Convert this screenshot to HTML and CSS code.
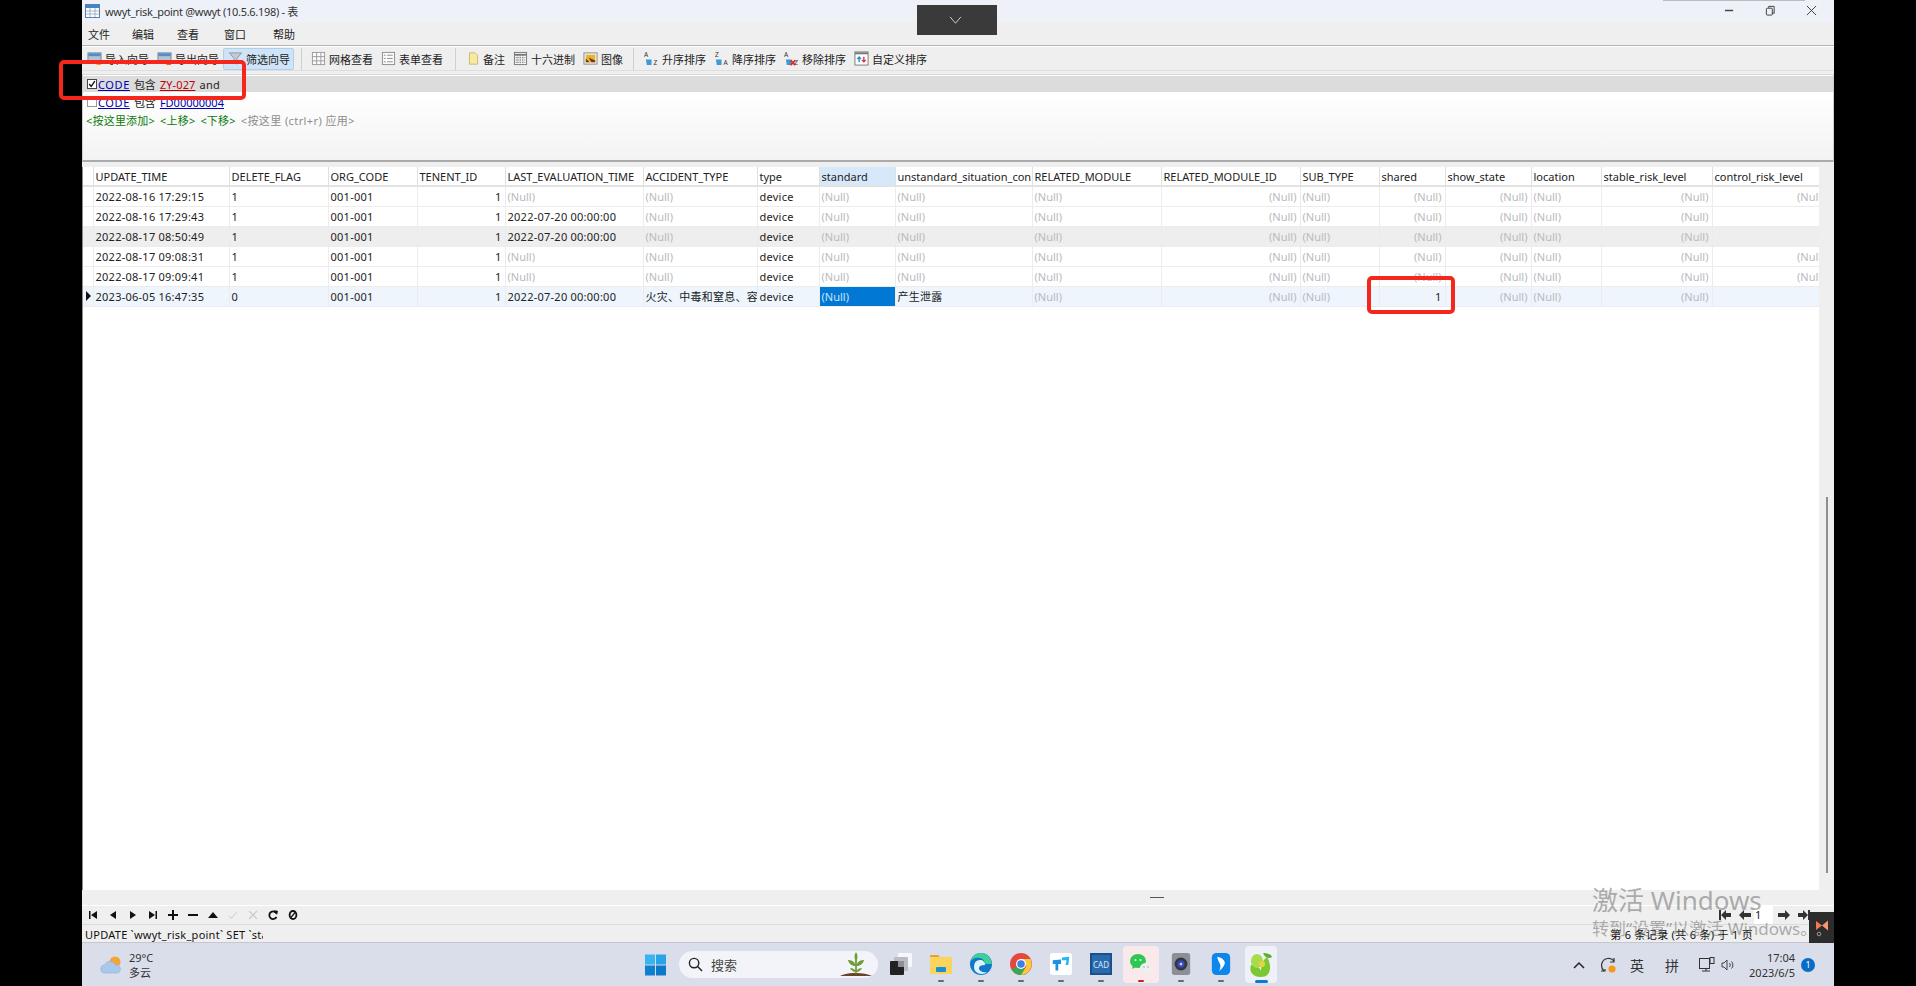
FILE: index.html
```html
<!DOCTYPE html>
<html lang="zh-CN">

<head>
    <meta charset="UTF-8">
    <title>wwyt_risk_point @wwyt (10.5.6.198) - 表</title>
    <link rel="stylesheet" href="styles.css">
</head>

<body>
    <div class="window">
        <!-- 标题栏 -->
        <div class="titlebar">
            <svg class="title-icon" viewBox="0 0 15 14"><rect x=".5" y=".5" width="14" height="13" fill="#fff" stroke="#5b7fa6"/><rect x="1" y="1" width="13" height="3" fill="#3f86c9"/><path d="M1 7h13M1 10h13M5 4v9M10 4v9" stroke="#9fb4c8"/></svg>
            <span class="title-text">wwyt_risk_point @wwyt (10.5.6.198) - 表</span>
            <div class="win-controls">
                <svg viewBox="0 0 12 12"><path d="M1 6h9" stroke="#444" stroke-width="1.6"/></svg>
                <svg viewBox="0 0 12 12" fill="none" stroke="#333"><rect x="1.5" y="3.5" width="6.5" height="7.5" rx="1"/><path d="M4 3V1.500h6V9H8"/></svg>
                <svg viewBox="0 0 12 12"><path d="M1 1l10 10M11 1L1 11" stroke="#333"/></svg>
            </div>
        </div>

        <div class="menubar">
            <span>文件</span><span>编辑</span><span>查看</span><span>窗口</span><span>帮助</span>
        </div>

        <!-- 工具栏 -->
        <div class="toolbar">
            <div class="tool">
                <svg viewBox="0 0 16 16"><rect x="1" y="2" width="14" height="11" fill="#b9c2cc" stroke="#7d8791"/><rect x="1.500" y="2.500" width="13" height="3" fill="#4a8fd0"/><path d="M10 12h5v3h-5z" fill="#e8a33c"/></svg>
                <span>导入向导</span>
            </div>
            <div class="tool">
                <svg viewBox="0 0 16 16"><rect x="1" y="2" width="14" height="11" fill="#b9c2cc" stroke="#7d8791"/><rect x="1.500" y="2.500" width="13" height="3" fill="#4a8fd0"/><path d="M10 12h5v3h-5z" fill="#d9702c"/></svg>
                <span>导出向导</span>
            </div>
            <div class="tool tool-active">
                <svg viewBox="0 0 16 16"><path d="M1.500 2h13L9.500 8v6l-3-1.500V8z" fill="#c3cbd2" stroke="#8d969e"/></svg>
                <span>筛选向导</span>
            </div>
            <i class="tool-sep"></i>
            <div class="tool">
                <svg viewBox="0 0 16 16" fill="#fafafa" stroke="#9a9a9a"><rect x="1.500" y="1.500" width="13" height="13"/><path d="M1.500 6h13M1.500 10.500h13M6 1.500v13M10.500 1.500v13"/></svg>
                <span>网格查看</span>
            </div>
            <div class="tool">
                <svg viewBox="0 0 16 16" fill="#fafafa" stroke="#8c8c8c"><rect x="1.500" y="1.500" width="13" height="13"/><path d="M3 4.500h2M3 8h2M3 11.500h2M6.500 4.500h6M6.500 8h6M6.500 11.500h6"/></svg>
                <span>表单查看</span>
            </div>
            <i class="tool-sep sep-b"></i>
            <div class="tool tool-note">
                <svg viewBox="0 0 16 16"><path d="M3 1h7l3 3v11H3z" fill="#f8e9a0" stroke="#c7b25a"/></svg>
                <span>备注</span>
            </div>
            <div class="tool">
                <svg viewBox="0 0 16 16" fill="#fafafa" stroke="#777"><rect x="1.500" y="1.500" width="13" height="13"/><path d="M1.500 4h13" stroke-width="2"/><path d="M1.500 7h13M1.500 9.500h13M1.500 12h13M4.500 4v10M7.500 4v10M10.500 4v10" stroke-dasharray="1 1"/></svg>
                <span>十六进制</span>
            </div>
            <div class="tool">
                <svg viewBox="0 0 16 16"><rect x="1" y="2" width="14" height="12" fill="#eee" stroke="#8a8a8a"/><rect x="3" y="4" width="10" height="8" fill="#e8b428"/><path d="M3 8l4 4H3zM6 7l7 3v2H9z" fill="#7a3510"/></svg>
                <span>图像</span>
            </div>
            <i class="tool-sep sep-c"></i>
            <div class="tool">
                <svg viewBox="0 0 16 16"><text x="0" y="6" class="sort-letter">A</text><text x="10" y="15" class="sort-letter">Z</text><path d="M2 9h6v6H3z" fill="#3d9ad6"/></svg>
                <span>升序排序</span>
            </div>
            <div class="tool">
                <svg viewBox="0 0 16 16"><text x="1" y="6" class="sort-letter">Z</text><text x="10" y="15" class="sort-letter">A</text><path d="M2 9h6v6H3z" fill="#3d9ad6"/></svg>
                <span>降序排序</span>
            </div>
            <div class="tool">
                <svg viewBox="0 0 16 16"><text x="0" y="6" class="sort-letter">A</text><text x="11" y="15" class="sort-letter">Z</text><path d="M2 9h6v6H3z" fill="#3d9ad6"/><path d="M7 10l5 5M12 10l-5 5" stroke="#d92c2c" stroke-width="2"/></svg>
                <span>移除排序</span>
            </div>
            <div class="tool">
                <svg viewBox="0 0 16 16"><rect x="1" y="1" width="14" height="14" fill="#fff" stroke="#777"/><path d="M1 2.500h14" stroke="#777" stroke-width="2"/><path d="M5.500 12V7M3.500 8.500l2-2 2 2" stroke="#2b8fd0" fill="none" stroke-width="1.500"/><path d="M10.500 6v5M8.500 9.500l2 2 2-2" stroke="#d33a4a" fill="none" stroke-width="1.500"/></svg>
                <span>自定义排序</span>
            </div>
        </div>

        <!-- 筛选 -->
        <div class="filter">
            <div class="filter-row filter-active">
                <span class="check checked"><svg viewBox="0 0 10 10"><path d="M1.500 5l2.500 3 4.500-6.500" fill="none" stroke="#111" stroke-width="1.700"/></svg></span>
                <a class="field code">CODE</a><span>包含</span><a class="value-red">ZY-027</a><span class="kw">and</span>
            </div>
            <div class="filter-row">
                <span class="check"></span>
                <a class="field code">CODE</a><span>包含</span><a class="field">FD00000004</a>
            </div>
            <div class="filter-actions">
                <span>&lt;按这里添加&gt;</span><span>&lt;上移&gt;</span><span>&lt;下移&gt;</span><span class="apply">&lt;按这里 (ctrl+r) 应用&gt;</span>
            </div>
        </div>

        <!-- 数据表 -->
        <div class="grid-area">
            <div class="grid">
                <table class="data">
                    <colgroup>
                        <col class="c0"><col class="c1"><col class="c2"><col class="c3"><col class="c4"><col class="c5"><col class="c6"><col class="c7"><col class="c8"><col class="c9"><col class="c10"><col class="c11"><col class="c12"><col class="c13"><col class="c14"><col class="c15"><col class="c16"><col class="c17">
                    </colgroup>
                    <thead>
                        <tr>
                            <th></th>
                            <th>UPDATE_TIME</th><th>DELETE_FLAG</th><th>ORG_CODE</th><th>TENENT_ID</th><th>LAST_EVALUATION_TIME</th><th>ACCIDENT_TYPE</th><th>type</th><th class="col-current">standard</th><th>unstandard_situation_con</th><th>RELATED_MODULE</th><th>RELATED_MODULE_ID</th><th>SUB_TYPE</th><th>shared</th><th>show_state</th><th>location</th><th>stable_risk_level</th><th>control_risk_level</th>
                        </tr>
                    </thead>
                    <tbody>
                        <tr>
                            <td class="rh"></td>
                            <td>2022-08-16 17:29:15</td><td>1</td><td>001-001</td><td class="r">1</td><td class="nul">(Null)</td><td class="nul">(Null)</td><td>device</td><td class="nul">(Null)</td><td class="nul">(Null)</td><td class="nul">(Null)</td><td class="r nul">(Null)</td><td class="nul">(Null)</td><td class="r nul">(Null)</td><td class="r nul">(Null)</td><td class="nul">(Null)</td><td class="r nul">(Null)</td><td class="r nul">(Null)</td>
                        </tr>
                        <tr>
                            <td class="rh"></td>
                            <td>2022-08-16 17:29:43</td><td>1</td><td>001-001</td><td class="r">1</td><td>2022-07-20 00:00:00</td><td class="nul">(Null)</td><td>device</td><td class="nul">(Null)</td><td class="nul">(Null)</td><td class="nul">(Null)</td><td class="r nul">(Null)</td><td class="nul">(Null)</td><td class="r nul">(Null)</td><td class="r nul">(Null)</td><td class="nul">(Null)</td><td class="r nul">(Null)</td><td></td>
                        </tr>
                        <tr class="alt">
                            <td class="rh"></td>
                            <td>2022-08-17 08:50:49</td><td>1</td><td>001-001</td><td class="r">1</td><td>2022-07-20 00:00:00</td><td class="nul">(Null)</td><td>device</td><td class="nul">(Null)</td><td class="nul">(Null)</td><td class="nul">(Null)</td><td class="r nul">(Null)</td><td class="nul">(Null)</td><td class="r nul">(Null)</td><td class="r nul">(Null)</td><td class="nul">(Null)</td><td class="r nul">(Null)</td><td></td>
                        </tr>
                        <tr>
                            <td class="rh"></td>
                            <td>2022-08-17 09:08:31</td><td>1</td><td>001-001</td><td class="r">1</td><td class="nul">(Null)</td><td class="nul">(Null)</td><td>device</td><td class="nul">(Null)</td><td class="nul">(Null)</td><td class="nul">(Null)</td><td class="r nul">(Null)</td><td class="nul">(Null)</td><td class="r nul">(Null)</td><td class="r nul">(Null)</td><td class="nul">(Null)</td><td class="r nul">(Null)</td><td class="r nul">(Null)</td>
                        </tr>
                        <tr>
                            <td class="rh"></td>
                            <td>2022-08-17 09:09:41</td><td>1</td><td>001-001</td><td class="r">1</td><td class="nul">(Null)</td><td class="nul">(Null)</td><td>device</td><td class="nul">(Null)</td><td class="nul">(Null)</td><td class="nul">(Null)</td><td class="r nul">(Null)</td><td class="nul">(Null)</td><td class="r nul">(Null)</td><td class="r nul">(Null)</td><td class="nul">(Null)</td><td class="r nul">(Null)</td><td class="r nul">(Null)</td>
                        </tr>
                        <tr class="current">
                            <td class="rh"><i class="row-mark"></i></td>
                            <td>2023-06-05 16:47:35</td><td>0</td><td>001-001</td><td class="r">1</td><td>2022-07-20 00:00:00</td><td>火灾、中毒和窒息、容器爆炸</td><td>device</td><td class="nul selected">(Null)</td><td>产生泄露</td><td class="nul">(Null)</td><td class="r nul">(Null)</td><td class="nul">(Null)</td><td class="r">1</td><td class="r nul">(Null)</td><td class="nul">(Null)</td><td class="r nul">(Null)</td><td></td>
                        </tr>
                    </tbody>
                </table>
            </div>
            <div class="vscroll"><i></i></div>
        </div>

        <div class="splitter"><i></i></div>

        <!-- 记录导航 -->
        <div class="navbar">
            <div class="nav-btn"><svg viewBox="0 0 10 10"><path d="M1 1h1.500v8H1zM9 1v8L3 5z"/></svg></div>
            <div class="nav-btn"><svg viewBox="0 0 10 10"><path d="M8 1v8L2 5z"/></svg></div>
            <div class="nav-btn"><svg viewBox="0 0 10 10"><path d="M2 1v8l6-4z"/></svg></div>
            <div class="nav-btn"><svg viewBox="0 0 10 10"><path d="M1 1v8l6-4zM7.500 1H9v8H7.500z"/></svg></div>
            <div class="nav-btn"><svg viewBox="0 0 10 10"><path d="M4 0h2v4h4v2H6v4H4V6H0V4h4z"/></svg></div>
            <div class="nav-btn"><svg viewBox="0 0 10 10"><path d="M0 4h10v2H0z"/></svg></div>
            <div class="nav-btn"><svg viewBox="0 0 10 10"><path d="M5 2l5 6H0z"/></svg></div>
            <div class="nav-btn"><svg viewBox="0 0 12 10"><path d="M1 6l3 3 7-8" fill="none" stroke="#ccc" stroke-width="1.200"/></svg></div>
            <div class="nav-btn"><svg viewBox="0 0 10 10"><path d="M1 1l8 8M9 1L1 9" stroke="#ccc" stroke-width="1.200"/></svg></div>
            <div class="nav-btn"><svg viewBox="0 0 10 10"><path d="M8.500 3.500A3.800 3.800 0 1 0 8.500 7" fill="none" stroke="#111" stroke-width="1.800"/><path d="M6 0l4 1-1 4z"/></svg></div>
            <div class="nav-btn"><svg viewBox="0 0 10 10"><ellipse cx="5" cy="5" rx="3.400" ry="4" fill="none" stroke="#111" stroke-width="1.800"/><path d="M2.500 8l5-6" stroke="#111" stroke-width="1.200"/></svg></div>
            <div class="pager">
                <svg viewBox="0 0 12 10"><path d="M0 0h2v10H0zM2 5l5-5v3h5v4H7v3z" fill="#333"/></svg>
                <svg viewBox="0 0 12 10"><path d="M0 5l5-5v3h7v4H5v3z" fill="#333"/></svg>
                <span class="page-input">1</span>
                <svg viewBox="0 0 12 10"><path d="M12 5L7 0v3H0v4h7v3z" fill="#333"/></svg>
                <svg viewBox="0 0 12 10"><path d="M12 0h-2v10h2zM10 5L5 0v3H0v4h5v3z" fill="#333"/></svg>
            </div>
        </div>

        <div class="statusbar">
            <span class="sql">UPDATE `wwyt_risk_point` SET `standard`</span>
            <span class="rec">第 6 条记录 (共 6 条) 于 1 页</span>
        </div>

        <!-- 任务栏 -->
        <div class="taskbar">
            <div class="weather">
                <svg viewBox="0 0 22 20"><circle cx="15" cy="7" r="5.500" fill="#f4a534"/><path d="M5 18a4 4 0 0 1-.5-8A6 6 0 0 1 15.500 10 4 4 0 0 1 17 18z" fill="#a9c8ea" stroke="#8db1da" stroke-width=".6"/></svg>
                <div class="weather-text"><span>29°C</span><span>多云</span></div>
            </div>
            <svg class="start" viewBox="0 0 22 22"><path d="M0 0h10.500v10.500H0z" fill="#38b4f0"/><path d="M11.500 0H22v10.500H11.500z" fill="#2aa3e6"/><path d="M0 11.500h10.500V22H0z" fill="#0f7fd0"/><path d="M11.500 11.500H22V22H11.500z" fill="#0e78c8"/></svg>
            <div class="search">
                <svg viewBox="0 0 16 16" class="search-icon"><circle cx="6.500" cy="6.500" r="5" fill="none" stroke="#222" stroke-width="1.500"/><path d="M10.200 10.200L15 15" stroke="#222" stroke-width="1.500"/></svg>
                <span>搜索</span>
                <svg viewBox="0 0 32 26" class="plant"><path d="M0 24c8-4 24-4 32 0z" fill="#6b4326"/><path d="M16 22V8" stroke="#5c8a2c" stroke-width="1.500"/><path d="M16 10C14 6 14 3 16 0c2 3 2 6 0 10zM16 14c-4 0-7-2-8-6 4 0 7 2 8 6zM16 14c4 0 7-2 8-6-4 0-7 2-8 6zM16 20c-3 0-5-2-6-4 3 0 5 1 6 4zM16 20c3 0 5-2 6-4-3 0-5 1-6 4z" fill="#6f9e36"/></svg>
            </div>
            <div class="slot">
                <svg viewBox="0 0 22 22"><rect x="8" y="0" width="14" height="14" rx="1" fill="#f6f7fa"/><rect x="4" y="4" width="14" height="14" rx="1" fill="#b9bcc4"/><rect x="0" y="8" width="14" height="14" rx="1" fill="#222"/><rect x="8" y="8" width="6" height="6" fill="#8d9098"/></svg>
            </div>
            <div class="slot dot">
                <svg viewBox="0 0 22 22"><path d="M0 3a1 1 0 0 1 1-1h7l2 2H0z" fill="#e0a526"/><rect x="0" y="4" width="22" height="17" rx="1" fill="#fbd55b"/><rect x="6" y="14" width="10" height="5" rx="1" fill="#1a8fd8"/></svg>
            </div>
            <div class="slot dot">
                <svg viewBox="0 0 22 22"><circle cx="11" cy="11" r="11" fill="#1177c9"/><path d="M22 12c0-7-5-12-11-12C6 0 2 3 1 8c2-3 6-4 9-3 4 1 5 4 4 6h8z" fill="#3fcf9a"/><path d="M15 12c0-3-2-5-5-5-4 0-6 3-6 7s3 7 8 7c2 0 4-1 5-2-4 1-8-1-8-4 0-2 2-3 6-3z" fill="#dff1fb"/></svg>
            </div>
            <div class="slot dot">
                <svg viewBox="0 0 22 22"><circle cx="11" cy="11" r="11" fill="#e5483d"/><path d="M11 11L1.500 16.500A11 11 0 0 0 11 22c2 0 4-.5 5.500-1.500z" fill="#3aa655"/><path d="M11 6h9.500A11 11 0 0 1 11 22l5.500-9z" fill="#f8cb3f"/><circle cx="11" cy="11" r="5" fill="#fff"/><circle cx="11" cy="11" r="3.800" fill="#3f7fe8"/></svg>
            </div>
            <div class="slot dot">
                <svg viewBox="0 0 24 24"><rect width="24" height="24" rx="3" fill="#fff"/><path d="M3 8l9-1v5H9v7H6v-7H3z" fill="#1f8fe6"/><path d="M13 5l8-1-1 9h-3l1-5h-5z" fill="#26b6ee"/></svg>
            </div>
            <div class="slot dot">
                <svg viewBox="0 0 22 22"><rect x="0" y="0" width="22" height="22" fill="#1c4f8c"/><rect x="2" y="2" width="18" height="18" fill="#2a6bb0"/><text x="11" y="15" class="cad-text">CAD</text></svg>
            </div>
            <div class="slot dot dot-red slot-wechat">
                <svg viewBox="0 0 22 22"><ellipse cx="8" cy="8" rx="8" ry="7" fill="#2ec752"/><path d="M3 12l-1 4 4-2z" fill="#2ec752"/><circle cx="5.500" cy="7" r="1" fill="#fff"/><circle cx="10.500" cy="7" r="1" fill="#fff"/><ellipse cx="16" cy="15" rx="6" ry="5" fill="#eef0ee"/><circle cx="14" cy="14" r=".7" fill="#999"/><circle cx="18" cy="14" r=".7" fill="#999"/></svg>
            </div>
            <div class="slot dot">
                <svg viewBox="0 0 20 24"><rect width="20" height="24" rx="3" fill="#8c8f96"/><circle cx="10" cy="12" r="7" fill="#31363f"/><circle cx="10" cy="12" r="4" fill="#3a48b8"/><circle cx="10" cy="12" r="1.500" fill="#c7d2ff"/></svg>
            </div>
            <div class="slot dot">
                <svg viewBox="0 0 20 24"><rect width="20" height="24" rx="5" fill="#0f86ea"/><path d="M6 4c5 1 9 4 8 8-1 3-4 6-6 8 1-3 2-5 1-8-1-2-3-5-3-8z" fill="#fff"/></svg>
            </div>
            <div class="slot dot-wide slot-open">
                <svg viewBox="0 0 24 26"><path d="M12 26C3 26 0 20 2 14c4 0 9 2 10 6 0-7 2-11 6-14 4 6 6 20-6 20z" fill="#7cc734"/><ellipse cx="8" cy="10" rx="6" ry="7" fill="#a7dc4b"/><path d="M14 2c4 0 8 1 9 4-3 2-7 1-9-4z" fill="#5fae2c"/><circle cx="13" cy="13" r="3" fill="#e9d23f"/></svg>
            </div>
            <div class="tray">
                <svg class="tray-chev" viewBox="0 0 12 8"><path d="M1 7l5-5 5 5" fill="none" stroke="#222" stroke-width="1.500"/></svg>
                <svg class="tray-sync" viewBox="0 0 16 16"><path d="M14 4A7 7 0 0 0 2 6c-1 3 0 6 2 8M4 1" fill="none" stroke="#333" stroke-width="1.200"/><path d="M14 1v4h-4M1 14h4v-2" fill="none" stroke="#333" stroke-width="1.200"/><circle cx="12" cy="12" r="3.600" fill="#f59a1b"/></svg>
                <span class="tray-ime">英</span>
                <span class="tray-ime ime-b">拼</span>
                <svg class="tray-net" viewBox="0 0 16 16" fill="none" stroke="#333"><rect x=".5" y="1.500" width="10" height="10"/><path d="M3 14h8M7 11.500V14"/><rect x="11" y=".5" width="4" height="6" fill="#d9deea"/></svg>
                <svg class="tray-vol" viewBox="0 0 14 12" fill="none" stroke="#333" stroke-width=".9"><path d="M1 4h2l3-3v10L3 8H1z"/><path d="M8.500 4a3 3 0 0 1 0 4M10.500 2.500a5 5 0 0 1 0 7"/></svg>
                <div class="clock"><span>17:04</span><span>2023/6/5</span></div>
                <span class="notify">1</span>
            </div>
        </div>

        <!-- 盖在窗口上面的东西 -->
        <div class="top-tab"><svg viewBox="0 0 14 10"><path d="M1 1l6 7 6-7" fill="none" stroke="#ddd"/></svg></div>
        <div class="top-sliver"></div>
        <div class="mark mark-filter"></div>
        <div class="mark mark-cell"></div>
        <div class="corner-app"><svg viewBox="0 0 14 18"><path d="M1 2l6 4.500L1 11z" fill="#f0794f"/><path d="M13 1.500v10L7 6.500z" fill="#f6996f"/><circle cx="4" cy="15" r="1.800" fill="none" stroke="#999"/></svg></div>
        <div class="watermark">
            <div class="wm-big">激活 Windows</div>
            <div class="wm-small">转到“设置”以激活 Windows。</div>
        </div>
    </div>
</body>

</html>
```

FILE: styles.css
```css
* {
    box-sizing: border-box;
}

html,
body {
    margin: 0;
    height: 100%;
    overflow: hidden;
    background: #000;
}

body {
    font-family: "Noto Sans", "Noto Sans CJK SC", sans-serif;
    font-size: 11px;
    color: #222;
}

svg {
    display: block;
    flex: none;
}

.window {
    position: relative;
    width: 1752px;
    height: 986px;
    margin-left: 82px;
    display: flex;
    flex-direction: column;
    background: #efefef;
    filter: blur(0.4px); /* 原图是视频截帧，本来就有点糊 */
}

/* 标题栏 */
.titlebar {
    height: 22px;
    background: #eef2f8;
    display: flex;
    align-items: center;
    padding-left: 3px;
}

.title-icon {
    width: 15px;
    height: 14px;
}

.title-text {
    margin-left: 5px;
    color: #333;
    letter-spacing: -0.3px;
}

.win-controls {
    margin-left: auto;
    display: flex;
    gap: 30px;
    padding-right: 17px;
}

.win-controls svg {
    width: 11px;
    height: 11px;
}

.menubar {
    height: 25px;
    display: flex;
    align-items: center;
    padding-left: 6px;
    border-bottom: 1px solid #b4b4b4;
}

.menubar span {
    margin-right: 22px;
}

.menubar span:nth-child(2) {
    margin-right: 23px;
}

.menubar span:nth-child(3) {
    margin-right: 25px;
}

.menubar span:nth-child(4) {
    margin-right: 27px;
}

/* 工具栏 */
.toolbar {
    height: 25px;
    border-top: 1px solid #fff;
    display: flex;
    align-items: center;
    padding-left: 1px;
    border-bottom: 1px solid #dedede;
}

.tool {
    display: flex;
    align-items: center;
    gap: 3px;
    height: 22px;
    padding: 0 4px;
    white-space: nowrap;
}

.tool svg {
    width: 15px;
    height: 15px;
}

.tool-active {
    background: #cfe4f6;
    border: 1px solid #aed0ec;
    border-radius: 2px;
    margin-left: 0;
    padding: 0 3px 0 4px;
}

.tool-sep {
    width: 1px;
    height: 22px;
    background: #cfcfcf;
    margin: 0 5px 0 7px;
}

.sep-b {
    margin: 0 7px 0 8px;
}

.sep-c {
    margin: 0 6px 0 6px;
}

.tool-note svg {
    width: 13px;
}

.sort-letter {
    font-size: 7px;
    fill: #333;
}

/* 筛选 */
.filter {
    height: 89px;
    margin-top: 3px;
    border-top: 1px solid #d8d8d8;
    border-right: 1px solid #cfcfcf;
    border-left: 1px solid #cfcfcf;
    border-bottom: 2px solid #aaa;
    padding-top: 1px;
    background: linear-gradient(#fff 18px, #fbfbfb 40px, #f3f3f3);
}

.filter-row {
    height: 16px;
    display: flex;
    align-items: center;
    gap: 4px;
    padding-left: 4px;
}

.filter-row + .filter-row {
    height: 18px;
    margin-top: 1px;
}

.filter-active {
    background: #dcdcdc;
}

.check {
    width: 10px;
    height: 10px;
    border: 1px solid #999;
    background: #fff;
    margin-right: -3px;
}

.checked {
    border-color: #444;
}

.field {
    color: #0000b4;
    text-decoration: underline;
}

.code {
    letter-spacing: 0.6px;
}

.value-red {
    color: #c00000;
    text-decoration: underline;
    letter-spacing: 0.1px;
}

.kw {
    letter-spacing: 0.3px;
}

.filter-actions {
    height: 16px;
    margin-top: 1px;
    display: flex;
    align-items: center;
    gap: 5px;
    padding-left: 3px;
    color: #0a7a0a;
    letter-spacing: 0.2px;
}

.apply {
    color: #8c8c8c;
    letter-spacing: 0.4px;
}

/* 数据表 */
.grid-area {
    height: 723px;
    margin-top: 5px;
    display: flex;
    flex: none;
}

.grid {
    flex: 1;
    min-width: 0;
    overflow: hidden;
    background: #fff;
    border-left: 1px solid #8a8a8a;
}

.data {
    table-layout: fixed;
    width: 1745px;
    border-collapse: collapse;
}

.c0 { width: 10px; }
.c1 { width: 136px; }
.c2 { width: 99px; }
.c3 { width: 89px; }
.c4 { width: 88px; }
.c5 { width: 138px; }
.c6 { width: 114px; }
.c7 { width: 62px; }
.c8 { width: 76px; }
.c9 { width: 137px; }
.c10 { width: 129px; }
.c11 { width: 139px; }
.c12 { width: 79px; }
.c13 { width: 66px; }
.c14 { width: 86px; }
.c15 { width: 70px; }
.c16 { width: 111px; }
.c17 { width: 116px; }

.data th,
.data td {
    height: 20px;
    padding: 0 3px 0 2px;
    text-align: left;
    font-weight: normal;
    white-space: nowrap;
    overflow: hidden;
    border-right: 1px solid #ececec;
    border-bottom: 1px solid #ececec;
}

.data td {
    letter-spacing: 0.25px;
}

.data th {
    height: 19px;
    border-right-color: #e0e0e0;
    border-bottom: 2px solid #e2e2e2;
}

.data .r {
    text-align: right;
}

.data .nul {
    color: #b9b9be;
    letter-spacing: 0;
}

.data .rh {
    padding: 0;
}

.alt td {
    background: #eeeeee;
}

.current td {
    background: #eef5fc;
}

.data .col-current {
    background: #d6e8f9;
}

.data .selected {
    background: #0078d4;
    color: #cfe3f6;
}

.row-mark {
    display: block;
    width: 0;
    height: 0;
    margin-left: 3px;
    border-left: 5px solid #111;
    border-top: 5px solid transparent;
    border-bottom: 5px solid transparent;
}

.vscroll {
    width: 15px;
    padding-top: 330px;
}

.vscroll i {
    display: block;
    width: 2px;
    height: 376px;
    margin-left: 7px;
    background: #8e8e8e;
}

.splitter {
    height: 15px;
    padding: 7px 0 0 1068px;
}

.splitter i {
    display: block;
    width: 14px;
    height: 1px;
    background: #555;
}

/* 记录导航 */
.navbar {
    height: 20px;
    display: flex;
    align-items: center;
    padding-left: 1px;
    border-top: 1px solid #fff;
    border-bottom: 1px solid #dcdcdc;
}

.nav-btn {
    width: 20px;
    display: flex;
    justify-content: center;
}

.nav-btn svg {
    width: 10px;
    height: 10px;
    fill: #111;
}

.pager {
    margin-left: auto;
    display: flex;
    align-items: center;
    padding-right: 24px;
    gap: 8px;
}

.pager svg {
    width: 12px;
    height: 10px;
}

.page-input {
    width: 19px;
    height: 18px;
    line-height: 18px;
    background: #fff;
    margin: 0 -3px 0 -5px;
    padding-left: 1px;
}

.statusbar {
    height: 18px;
    display: flex;
    align-items: center;
    padding: 1px 0 0 3px;
    border-bottom: 1px solid #c4c7cf;
}

.sql {
    width: 178px;
    overflow: hidden;
    white-space: nowrap;
    color: #111;
    letter-spacing: 0.25px;
}

.rec {
    margin-left: auto;
    margin-right: 81px;
    color: #111;
    letter-spacing: 0.3px;
}

/* 任务栏 */
.taskbar {
    height: 43px;
    flex: none;
    background: #d9deea;
    display: flex;
    align-items: center;
    padding-left: 18px;
}

.weather {
    display: flex;
    align-items: center;
    gap: 7px;
    width: 51px;
}

.weather svg {
    width: 22px;
    height: 20px;
}

.weather-text,
.clock {
    display: flex;
    flex-direction: column;
    line-height: 15px;
    color: #333;
    white-space: nowrap;
}

.start {
    width: 21px;
    height: 22px;
    margin-left: 494px;
}

.search {
    width: 199px;
    height: 27px;
    margin-left: 13px;
    border-radius: 14px;
    background: #f2f4f9;
    display: flex;
    align-items: center;
    padding-left: 9px;
    font-size: 13px;
    color: #444;
}

.search-icon {
    width: 15px;
    height: 15px;
    margin-right: 8px;
}

.plant {
    width: 32px;
    height: 26px;
    margin-left: auto;
    margin-right: 6px;
}

.slot {
    position: relative;
    width: 40px;
    height: 37px;
    display: flex;
    align-items: center;
    justify-content: center;
    margin-top: -1px;
}

.slot svg {
    width: 22px;
    height: 22px;
}

.search + .slot {
    margin-left: 3px;
}

.slot.dot::after {
    content: "";
    position: absolute;
    left: 17px;
    bottom: 1px;
    width: 6px;
    height: 2px;
    border-radius: 1px;
    background: #666a75;
}

.slot.dot-red::after {
    background: #c8232c;
}

.slot-wechat {
    background: #fae9eb;
    border-radius: 4px;
    width: 36px;
    margin: -1px 2px 0;
}

.slot.slot-wechat::after {
    left: 15px;
}

.slot-open {
    width: 32px;
    margin: -1px 4px 0;
    background: #eef1f7;
    border-radius: 4px;
}

.slot-open svg {
    width: 26px;
    height: 26px;
}

.slot-open::after {
    content: "";
    position: absolute;
    left: 10px;
    bottom: 0;
    width: 13px;
    height: 3px;
    border-radius: 2px;
    background: #0f78d0;
}

.tray {
    margin-left: auto;
    display: flex;
    align-items: center;
    padding-right: 19px;
}

.tray-chev {
    width: 12px;
    height: 8px;
}

.tray-sync {
    width: 16px;
    height: 16px;
    margin-left: 15px;
}

.tray-ime {
    margin-left: 14px;
    font-size: 14px;
    color: #333;
}

.ime-b {
    margin-left: 21px;
}

.tray-net {
    width: 16px;
    height: 16px;
    margin-left: 20px;
}

.tray-vol {
    width: 14px;
    height: 12px;
    margin-left: 6px;
}

.clock {
    width: 44px;
    margin-left: 16px;
    align-items: flex-end;
}

.notify {
    width: 14px;
    height: 14px;
    margin-left: 6px;
    border-radius: 50%;
    background: #0a6cc4;
    color: #fff;
    font-size: 9px;
    line-height: 14px;
    text-align: center;
}

/* 盖在窗口上面 */
.top-tab {
    position: absolute;
    left: 835px;
    top: 5px;
    width: 80px;
    height: 30px;
    padding-right: 4px;
    background: #3a3a3a;
    display: flex;
    align-items: center;
    justify-content: center;
}

.top-tab svg {
    width: 13px;
    height: 9px;
}

.top-sliver {
    position: absolute;
    left: 1581px;
    top: 0;
    width: 142px;
    height: 1px;
    background: #b9bcc2;
}

.mark {
    position: absolute;
    border: 4px solid #f5261b;
    border-radius: 5px;
}

.mark-filter {
    left: -23px;
    top: 60px;
    width: 187px;
    height: 40px;
}

.mark-cell {
    left: 1285px;
    top: 276px;
    width: 88px;
    height: 38px;
}

.corner-app {
    position: absolute;
    left: 1727px;
    top: 912px;
    width: 25px;
    height: 31px;
    background: #2c2c2c;
    display: flex;
    align-items: center;
    justify-content: center;
}

.corner-app svg {
    width: 14px;
    height: 18px;
}

.watermark {
    position: absolute;
    left: 1510px;
    top: 883px;
    color: rgba(110, 110, 110, 0.55);
    white-space: nowrap;
}

.wm-big {
    font-size: 26px;
    line-height: 34px;
}

.wm-small {
    font-size: 17px;
    line-height: 24px;
}

.cad-text {
    font-size: 8px;
    fill: #dfe9f5;
    text-anchor: middle;
}
```
